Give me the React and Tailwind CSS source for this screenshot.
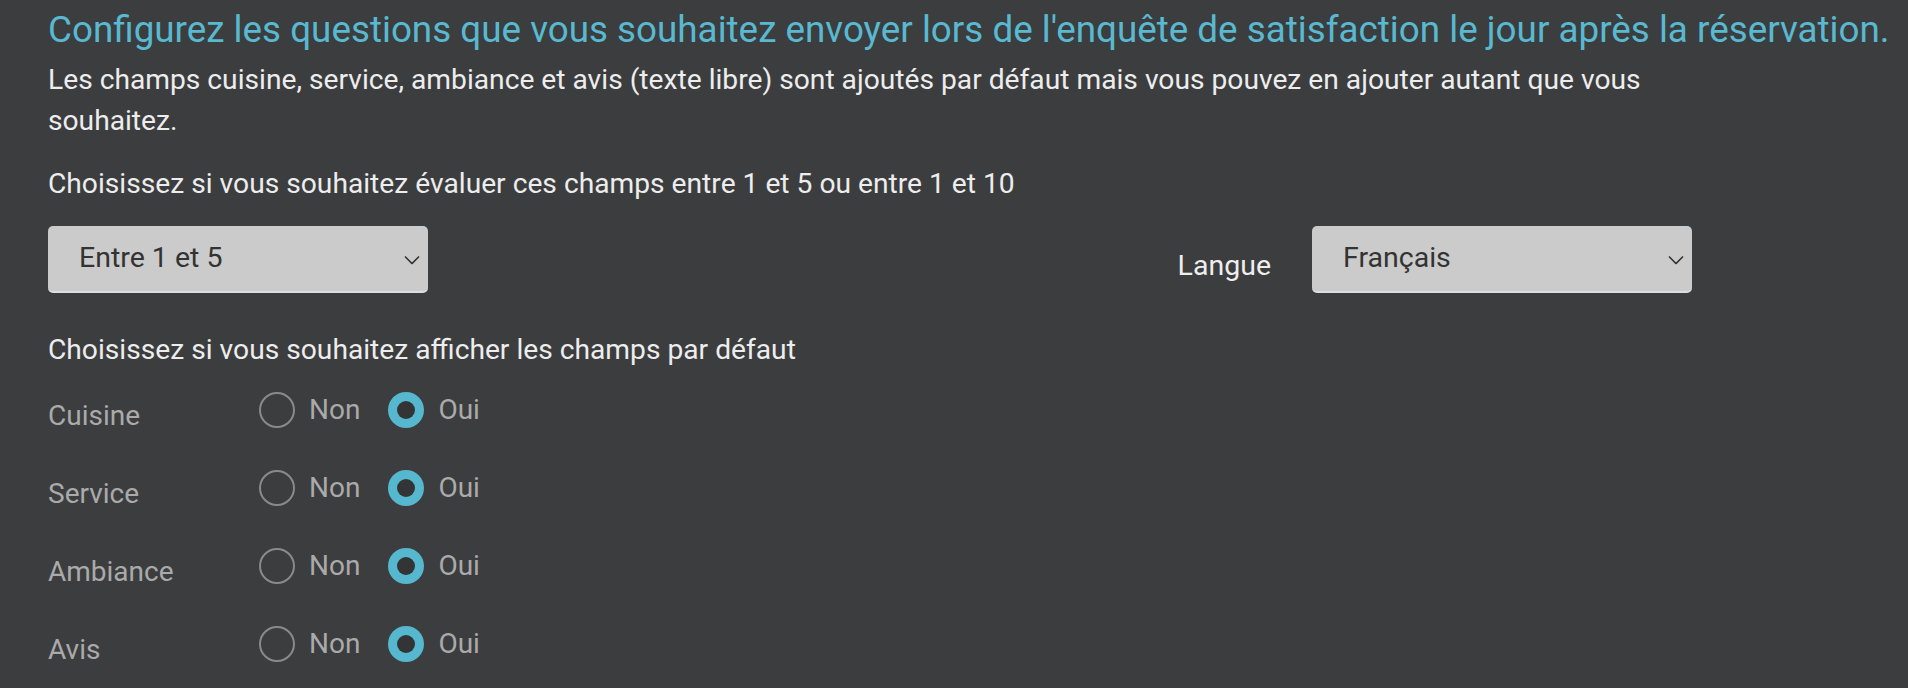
import React, { useState } from 'react';

// champs affichés par défaut dans l'enquête
const FIELDS = ['Cuisine', 'Service', 'Ambiance', 'Avis'];

function Chevron() {
  return (
    <svg
      width="16"
      height="9"
      viewBox="0 0 16 9"
      className="pointer-events-none absolute right-[8px] top-1/2 -translate-y-1/2"
    >
      <path d="M1 1 L8 8 L15 1" fill="none" stroke="#333" strokeWidth="1.6" />
    </svg>
  );
}

function Select({ value, onChange, options }) {
  return (
    <div className="relative w-[380px]">
      <select
        value={value}
        onChange={(e) => onChange(e.target.value)}
        className="h-[67px] w-full appearance-none rounded-[5px] border-b-2 border-[#dedede] bg-[#cbcbcb] pl-[31px] pr-10 text-[28.5px] text-[#333] outline-none"
      >
        {options.map((o) => (
          <option key={o}>{o}</option>
        ))}
      </select>
      <Chevron />
    </div>
  );
}

function Radio({ checked, label, onClick }) {
  return (
    <button type="button" onClick={onClick} className="flex items-center gap-[14px]">
      {checked ? (
        <span className="flex h-[36px] w-[36px] items-center justify-center rounded-full bg-[#56b8cf]">
          <span className="h-[18px] w-[18px] rounded-full bg-[#333436]" />
        </span>
      ) : (
        <span className="h-[36px] w-[36px] rounded-full border-2 border-[#8a8a8a]" />
      )}
      <span className="text-[28px] leading-[36px] text-[#aaaaaa]">{label}</span>
    </button>
  );
}

function App() {
  const [echelle, setEchelle] = useState('Entre 1 et 5');
  const [langue, setLangue] = useState('Français');
  const [affiche, setAffiche] = useState({ Cuisine: true, Service: true, Ambiance: true, Avis: true });

  return (
    <div className="min-h-screen bg-[#3c3d3f] px-[48px] pt-[8px] font-['Roboto','Liberation_Sans',sans-serif]">
      {/* titre */}
      <h1 className="whitespace-nowrap text-[36.8px] leading-[44px] text-[#58b9d1]">
        Configurez les questions que vous souhaitez envoyer lors de l'enquête de satisfaction le jour après la réservation.
      </h1>

      <div className="w-[1644px]">
        <p className="mt-[7px] text-[28.2px] leading-[41px] text-[#ededed]">
          Les champs cuisine, service, ambiance et avis (texte libre) sont ajoutés par défaut mais vous pouvez en ajouter autant que vous souhaitez.
        </p>

        <p className="mt-[22px] text-[28.2px] leading-[41px] text-[#ededed]">
          Choisissez si vous souhaitez évaluer ces champs entre 1 et 5 ou entre 1 et 10
        </p>

        {/* échelle + langue */}
        <div className="mt-[22px] flex items-center justify-between">
          <Select value={echelle} onChange={setEchelle} options={['Entre 1 et 5', 'Entre 1 et 10']} />
          <div className="flex items-center gap-[41px]">
            <span className="pt-[14px] text-[28.5px] text-[#eeeeee]">Langue</span>
            <Select value={langue} onChange={setLangue} options={['Français', 'English']} />
          </div>
        </div>

        <p className="mt-[36px] text-[28.2px] leading-[41px] text-[#ededed]">
          Choisissez si vous souhaitez afficher les champs par défaut
        </p>

        {/* champs par défaut */}
        <div className="mt-[22px] flex flex-col gap-[36px] pb-10">
          {FIELDS.map((f) => (
            <div key={f} className="flex items-start">
              <span className="w-[211px] pt-[6px] text-[28px] leading-[36px] text-[#aaaaaa]">{f}</span>
              <div className="flex items-center gap-[28px]">
                <Radio label="Non" checked={!affiche[f]} onClick={() => setAffiche({ ...affiche, [f]: false })} />
                <Radio label="Oui" checked={affiche[f]} onClick={() => setAffiche({ ...affiche, [f]: true })} />
              </div>
            </div>
          ))}
        </div>
      </div>
    </div>
  );
}

export default App;
